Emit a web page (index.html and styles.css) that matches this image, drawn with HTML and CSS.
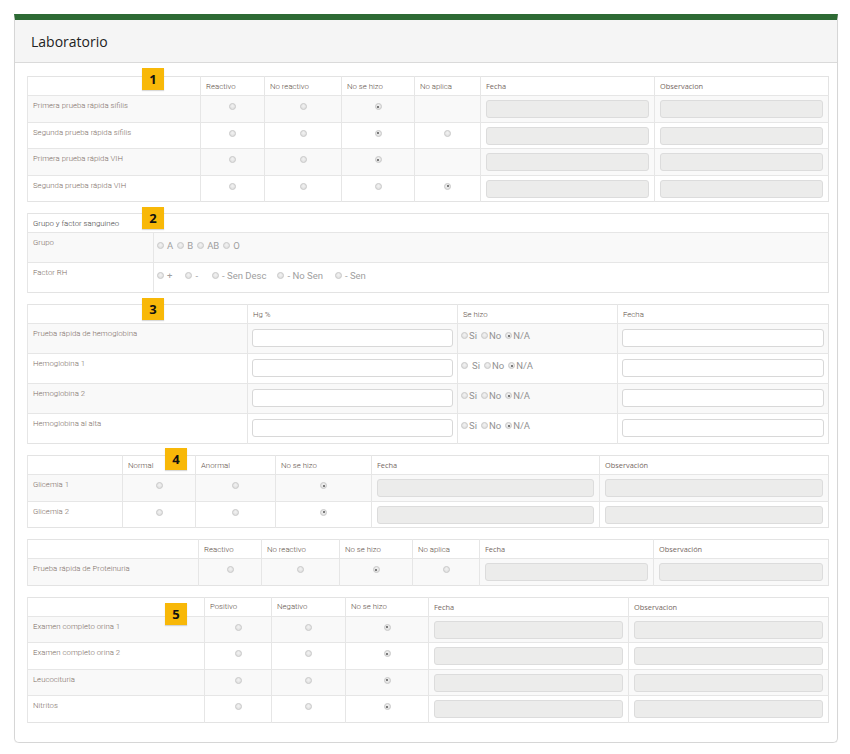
FILE: index.html
```html
<!DOCTYPE html>
<html lang="es">
<head>
<meta charset="utf-8">
<title>Laboratorio</title>
<link rel="stylesheet" href="styles.css">
</head>
<body>
<div class="panel">
  <div class="panel-head"><h1>Laboratorio</h1></div>
  <div class="panel-body">

    <div class="block">
      <span class="badge b1">1</span>
      <table class="grid t1">
        <colgroup><col class="c1"><col class="c2"><col class="c3"><col class="c4"><col class="c5"><col class="c6"><col class="c7"></colgroup>
        <thead><tr><th></th><th>Reactivo</th><th>No reactivo</th><th>No se hizo</th><th>No aplica</th><th class="alt">Fecha</th><th class="alt">Observacion</th></tr></thead>
        <tbody>
          <tr><td class="lbl">Primera prueba rápida sífilis</td><td class="rc"><span class="r"></span></td><td class="rc"><span class="r"></span></td><td class="rc"><span class="r on"></span></td><td class="rc"></td><td class="fc"><span class="inp dis"></span></td><td class="fc"><span class="inp dis"></span></td></tr>
          <tr><td class="lbl">Segunda prueba rápida sífilis</td><td class="rc"><span class="r"></span></td><td class="rc"><span class="r"></span></td><td class="rc"><span class="r on"></span></td><td class="rc"><span class="r"></span></td><td class="fc"><span class="inp dis"></span></td><td class="fc"><span class="inp dis"></span></td></tr>
          <tr><td class="lbl">Primera prueba rápida VIH</td><td class="rc"><span class="r"></span></td><td class="rc"><span class="r"></span></td><td class="rc"><span class="r on"></span></td><td class="rc"></td><td class="fc"><span class="inp dis"></span></td><td class="fc"><span class="inp dis"></span></td></tr>
          <tr><td class="lbl">Segunda prueba rápida VIH</td><td class="rc"><span class="r"></span></td><td class="rc"><span class="r"></span></td><td class="rc"><span class="r"></span></td><td class="rc"><span class="r on"></span></td><td class="fc"><span class="inp dis"></span></td><td class="fc"><span class="inp dis"></span></td></tr>
        </tbody>
      </table>
    </div>

    <div class="block">
      <span class="badge b2">2</span>
      <table class="grid t2">
        <colgroup><col class="c1"><col class="c2"></colgroup>
        <thead><tr><th colspan="2" class="dark">Grupo y factor sanguineo</th></tr></thead>
        <tbody>
          <tr class="tall"><td class="lbl">Grupo</td><td class="opts"><span class="opt"><span class="r"></span>A</span><span class="opt"><span class="r"></span>B</span><span class="opt"><span class="r"></span>AB</span><span class="opt"><span class="r"></span>O</span></td></tr>
          <tr class="tall"><td class="lbl">Factor RH</td><td class="opts rh"><span class="opt"><span class="r"></span>+</span><span class="opt"><span class="r"></span>-</span><span class="opt"><span class="r"></span>- Sen Desc</span><span class="opt"><span class="r"></span>- No Sen</span><span class="opt"><span class="r"></span>- Sen</span></td></tr>
        </tbody>
      </table>
    </div>

    <div class="block">
      <span class="badge b3">3</span>
      <table class="grid t3">
        <colgroup><col class="c1"><col class="c2"><col class="c3"><col class="c4"></colgroup>
        <thead><tr><th></th><th>Hg %</th><th>Se hizo</th><th>Fecha</th></tr></thead>
        <tbody>
          <tr><td class="lbl">Prueba rápida de hemoglobina</td><td class="fc"><span class="inp"></span></td><td class="sh"><span class="opt"><span class="r"></span>Si</span><span class="opt"><span class="r"></span>No</span><span class="opt"><span class="r on"></span>N/A</span></td><td class="fc"><span class="inp"></span></td></tr>
          <tr><td class="lbl">Hemoglobina 1</td><td class="fc"><span class="inp"></span></td><td class="sh"><span class="opt sp"><span class="r"></span>Si</span><span class="opt"><span class="r"></span>No</span><span class="opt"><span class="r on"></span>N/A</span></td><td class="fc"><span class="inp"></span></td></tr>
          <tr><td class="lbl">Hemoglobina 2</td><td class="fc"><span class="inp"></span></td><td class="sh"><span class="opt"><span class="r"></span>Si</span><span class="opt"><span class="r"></span>No</span><span class="opt"><span class="r on"></span>N/A</span></td><td class="fc"><span class="inp"></span></td></tr>
          <tr><td class="lbl">Hemoglobina al alta</td><td class="fc"><span class="inp"></span></td><td class="sh"><span class="opt"><span class="r"></span>Si</span><span class="opt"><span class="r"></span>No</span><span class="opt"><span class="r on"></span>N/A</span></td><td class="fc"><span class="inp"></span></td></tr>
        </tbody>
      </table>
    </div>

    <div class="block">
      <span class="badge b4">4</span>
      <table class="grid t4">
        <colgroup><col class="c1"><col class="c2"><col class="c3"><col class="c4"><col class="c5"><col class="c6"></colgroup>
        <thead><tr><th></th><th>Normal</th><th>Anormal</th><th>No se hizo</th><th class="alt">Fecha</th><th class="alt">Observación</th></tr></thead>
        <tbody>
          <tr><td class="lbl">Glicemia 1</td><td class="rc"><span class="r"></span></td><td class="rc"><span class="r"></span></td><td class="rc"><span class="r on"></span></td><td class="fc"><span class="inp dis"></span></td><td class="fc"><span class="inp dis"></span></td></tr>
          <tr><td class="lbl">Glicemia 2</td><td class="rc"><span class="r"></span></td><td class="rc"><span class="r"></span></td><td class="rc"><span class="r on"></span></td><td class="fc"><span class="inp dis"></span></td><td class="fc"><span class="inp dis"></span></td></tr>
        </tbody>
      </table>
    </div>

    <div class="block">
      <table class="grid t5">
        <colgroup><col class="c1"><col class="c2"><col class="c3"><col class="c4"><col class="c5"><col class="c6"><col class="c7"></colgroup>
        <thead><tr><th></th><th>Reactivo</th><th>No reactivo</th><th>No se hizo</th><th>No aplica</th><th class="alt">Fecha</th><th class="alt">Observación</th></tr></thead>
        <tbody>
          <tr><td class="lbl">Prueba rápida de Proteinuria</td><td class="rc"><span class="r"></span></td><td class="rc"><span class="r"></span></td><td class="rc"><span class="r on"></span></td><td class="rc"><span class="r"></span></td><td class="fc"><span class="inp dis"></span></td><td class="fc"><span class="inp dis"></span></td></tr>
        </tbody>
      </table>
    </div>

    <div class="block last">
      <span class="badge b5">5</span>
      <table class="grid t6">
        <colgroup><col class="c1"><col class="c2"><col class="c3"><col class="c4"><col class="c5"><col class="c6"></colgroup>
        <thead><tr><th></th><th>Positivo</th><th>Negativo</th><th>No se hizo</th><th class="alt">Fecha</th><th class="alt">Observacion</th></tr></thead>
        <tbody>
          <tr><td class="lbl">Examen completo orina 1</td><td class="rc"><span class="r"></span></td><td class="rc"><span class="r"></span></td><td class="rc"><span class="r on"></span></td><td class="fc"><span class="inp dis"></span></td><td class="fc"><span class="inp dis"></span></td></tr>
          <tr><td class="lbl">Examen completo orina 2</td><td class="rc"><span class="r"></span></td><td class="rc"><span class="r"></span></td><td class="rc"><span class="r on"></span></td><td class="fc"><span class="inp dis"></span></td><td class="fc"><span class="inp dis"></span></td></tr>
          <tr><td class="lbl">Leucocituria</td><td class="rc"><span class="r"></span></td><td class="rc"><span class="r"></span></td><td class="rc"><span class="r on"></span></td><td class="fc"><span class="inp dis"></span></td><td class="fc"><span class="inp dis"></span></td></tr>
          <tr><td class="lbl">Nitritos</td><td class="rc"><span class="r"></span></td><td class="rc"><span class="r"></span></td><td class="rc"><span class="r on"></span></td><td class="fc"><span class="inp dis"></span></td><td class="fc"><span class="inp dis"></span></td></tr>
        </tbody>
      </table>
    </div>

  </div>
</div>
</body>
</html>
```

FILE: styles.css
```css
* { box-sizing: border-box; }
body {
  margin: 0;
  padding: 14px 0 0 14px;
  background: #fff;
  font-family: Roboto, "Liberation Sans", sans-serif;
}
.panel {
  width: 824px;
  border: 1px solid #d6d6d6;
  border-top: 6px solid #2d6a34;
  border-radius: 0 0 5px 5px;
  box-shadow: 0 1px 1px rgba(0,0,0,0.05);
}
.panel-head {
  height: 43px;
  background: #f5f5f5;
  border-bottom: 1px solid #dadada;
  padding-left: 16px;
  display: flex;
  align-items: center;
}
.panel-head h1 {
  margin: 0;
  font-family: "Open Sans", "Liberation Sans", sans-serif;
  font-weight: 400;
  font-size: 14px;
  color: #222;
}
.panel-body { padding: 13px 12px 19px; }
.block { position: relative; margin-bottom: 11px; }
.block.last { margin-bottom: 0; }

.badge {
  position: absolute;
  width: 22px;
  height: 22px;
  background: #f8b808;
  color: #111;
  font-family: "Open Sans", "Liberation Sans", sans-serif;
  font-weight: 700;
  font-size: 13px;
  line-height: 22px;
  text-align: center;
  z-index: 2;
  box-shadow: 0 1px 1px rgba(0,0,0,0.15);
}
.b1 { left: 115px; top: -8px; }
.b2 { left: 115px; top: -6px; }
.b3 { left: 115px; top: -6px; }
.b4 { left: 138px; top: -7px; }
.b5 { left: 138px; top: 6px; }

.grid {
  width: 801px;
  border-collapse: collapse;
  table-layout: fixed;
  border: 1px solid #e3e3e3;
  font-size: 7.8px;
  font-weight: 300;
  background: #fff;
}
.grid th {
  height: 19px;
  padding: 0 5px;
  text-align: left;
  font-weight: 300;
  color: #5e5047;
  border-left: 1px solid #e6e6e6;
  border-bottom: 1px solid #e6e6e6;
  vertical-align: middle;
}
.grid th.alt { font-family: "Open Sans", "Liberation Sans", sans-serif; font-size: 7.4px; font-weight: 400; color: #76685f; }
.grid th.dark { color: #444; }
.grid td {
  padding: 4px 5px 3.5px;
  border-left: 1px solid #e6e6e6;
  border-top: 1px solid #e6e6e6;
  vertical-align: top;
}
.grid tbody tr:nth-child(odd) td { background: #f9f9f9; }
.grid td.lbl { color: #7d6e66; padding-top: 5px; line-height: 10px; }
.grid td.rc { text-align: center; padding-top: 6px; }
.grid td.fc { padding: 4px 5px 3.5px; }

.r {
  display: inline-block;
  width: 7px;
  height: 7px;
  border-radius: 50%;
  border: 1px solid #cacaca;
  background: radial-gradient(circle at 50% 40%, #f3f3f3, #dadada);
  position: relative;
  vertical-align: middle;
}
.r.on::after {
  content: "";
  position: absolute;
  left: 1.5px;
  top: 1.5px;
  width: 2px;
  height: 2px;
  border-radius: 50%;
  background: #555;
}

.inp {
  display: block;
  height: 18px;
  border: 1px solid #d8d8d8;
  border-radius: 3px;
  background: #fff;
}
.inp.dis { background: #ececeb; border-color: #dcdcdc; }

.t1 .c1 { width: 173px; } .t1 .c2 { width: 64px; } .t1 .c3 { width: 77px; }
.t1 .c4 { width: 73px; } .t1 .c5 { width: 66px; } .t1 .c6 { width: 174px; } .t1 .c7 { width: 174px; }

.t2 .c1 { width: 126px; } .t2 .c2 { width: 675px; }
.t2 tr.tall td { height: 30px; }
.t2 td.opts { padding: 7px 5px 0 3px; font-size: 9.5px; font-weight: 400; color: #a0a0a0; }
.opt { display: inline-flex; align-items: center; gap: 3px; margin-right: 4px; }
.opts.rh .opt:nth-child(1) { margin-right: 13px; }
.opts.rh .opt:nth-child(2) { margin-right: 14px; }
.opts.rh .opt:nth-child(3) { margin-right: 11px; }
.opts.rh .opt:nth-child(4) { margin-right: 12px; }

.t3 .c1 { width: 220px; } .t3 .c2 { width: 210px; } .t3 .c3 { width: 160px; } .t3 .c4 { width: 211px; }
.t3 td { height: 30px; }
.t3 td.fc { padding: 5px 4px 6px; }
.t3 td.sh { padding: 6px 3px 0; font-size: 9.5px; font-weight: 400; color: #929292; }
.t3 .opt { gap: 1px; margin-right: 4px; }
.t3 .opt.sp { gap: 4px; }

.t4 .c1 { width: 95px; } .t4 .c2 { width: 73px; } .t4 .c3 { width: 80px; }
.t4 .c4 { width: 96px; } .t4 .c5 { width: 228px; } .t4 .c6 { width: 229px; }

.t5 .c1 { width: 171px; } .t5 .c2 { width: 63px; } .t5 .c3 { width: 78px; }
.t5 .c4 { width: 73px; } .t5 .c5 { width: 67px; } .t5 .c6 { width: 174px; } .t5 .c7 { width: 175px; }

.t6 .c1 { width: 177px; } .t6 .c2 { width: 67px; } .t6 .c3 { width: 74px; }
.t6 .c4 { width: 83px; } .t6 .c5 { width: 200px; } .t6 .c6 { width: 200px; }
```
